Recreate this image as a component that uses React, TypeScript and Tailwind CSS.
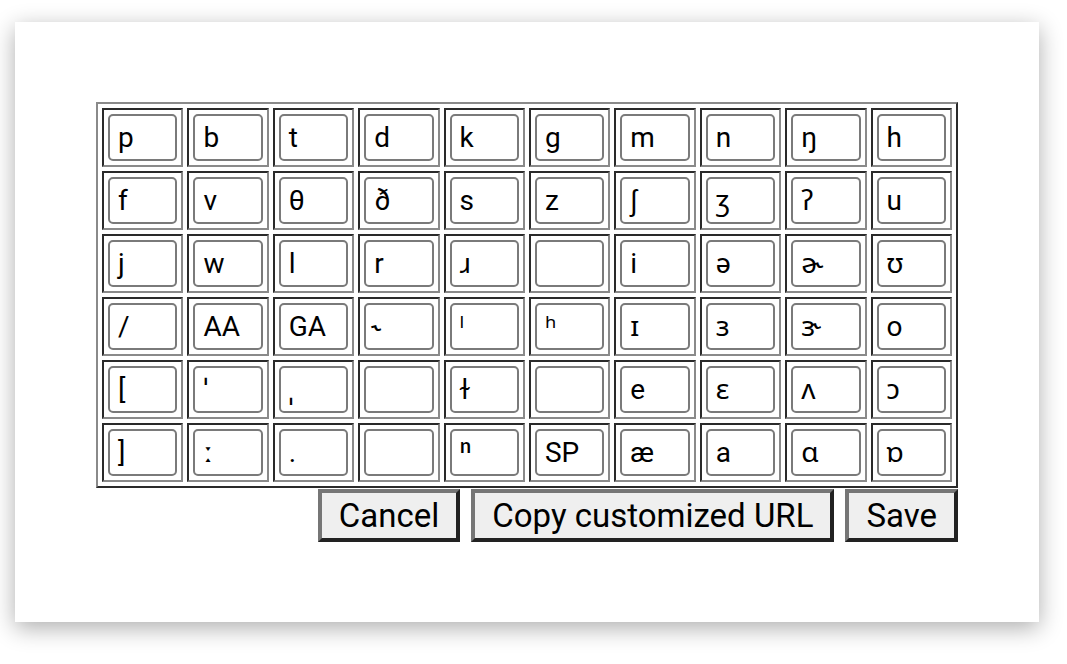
import React from "react"

const ROWS: string[][] = [
  ["p", "b", "t", "d", "k", "g", "m", "n", "ŋ", "h"],
  ["f", "v", "θ", "ð", "s", "z", "ʃ", "ʒ", "ʔ", "u"],
  ["j", "w", "l", "r", "ɹ", "", "i", "ə", "ɚ", "ʊ"],
  ["/", "AA", "GA", "˞", "ˡ", "ʰ", "ɪ", "ɜ", "ɝ", "o"],
  ["[", "ˈ", "ˌ", "", "ɫ", "", "e", "ɛ", "ʌ", "ɔ"],
  ["]", "ː", ".", "", "ⁿ", "SP", "æ", "a", "ɑ", "ɒ"],
]

function KeyCell({ value }: { value: string }) {
  return (
    <td className="w-[81.4px] h-[59px] p-[4px] border-2 border-t-[#2a2a2a] border-l-[#2a2a2a] border-b-[#8a8a8a] border-r-[#8a8a8a]">
      <div className="flex items-center h-full w-full border-2 border-[#7a7a7a] rounded-[5px] pl-[8px] text-[28px] leading-none text-black bg-white">
        {value}
      </div>
    </td>
  )
}

function ActionButton({ label }: { label: string }) {
  return (
    <button className="h-[53px] px-[17px] bg-[#efefef] text-[33px] leading-none text-black border-[4px] border-t-[#767676] border-l-[#767676] border-b-[#222] border-r-[#222]">
      {label}
    </button>
  )
}

export default function App() {
  return (
    <div
      className="min-h-screen bg-white pt-[22px] pl-[15px]"
      style={{ fontFamily: 'Roboto, "Noto Sans", "DejaVu Sans", sans-serif' }}
    >
      <div className="w-[1024px] h-[600px] bg-white shadow-[0_6px_22px_rgba(0,0,0,0.32)] pl-[81px] pt-[80px]">
        <div className="inline-flex flex-col">
          {/* Keyboard grid */}
          <table className="w-[862px] table-fixed border-separate border-spacing-[4px] border-2 border-t-[#8a8a8a] border-l-[#8a8a8a] border-b-[#2a2a2a] border-r-[#2a2a2a]">
            <tbody>
              {ROWS.map((row, i) => (
                <tr key={i}>
                  {row.map((v, j) => (
                    <KeyCell key={j} value={v} />
                  ))}
                </tr>
              ))}
            </tbody>
          </table>

          {/* Actions */}
          <div className="flex justify-end gap-[11px] mt-[1px]">
            <ActionButton label="Cancel" />
            <ActionButton label="Copy customized URL" />
            <ActionButton label="Save" />
          </div>
        </div>
      </div>
    </div>
  )
}
